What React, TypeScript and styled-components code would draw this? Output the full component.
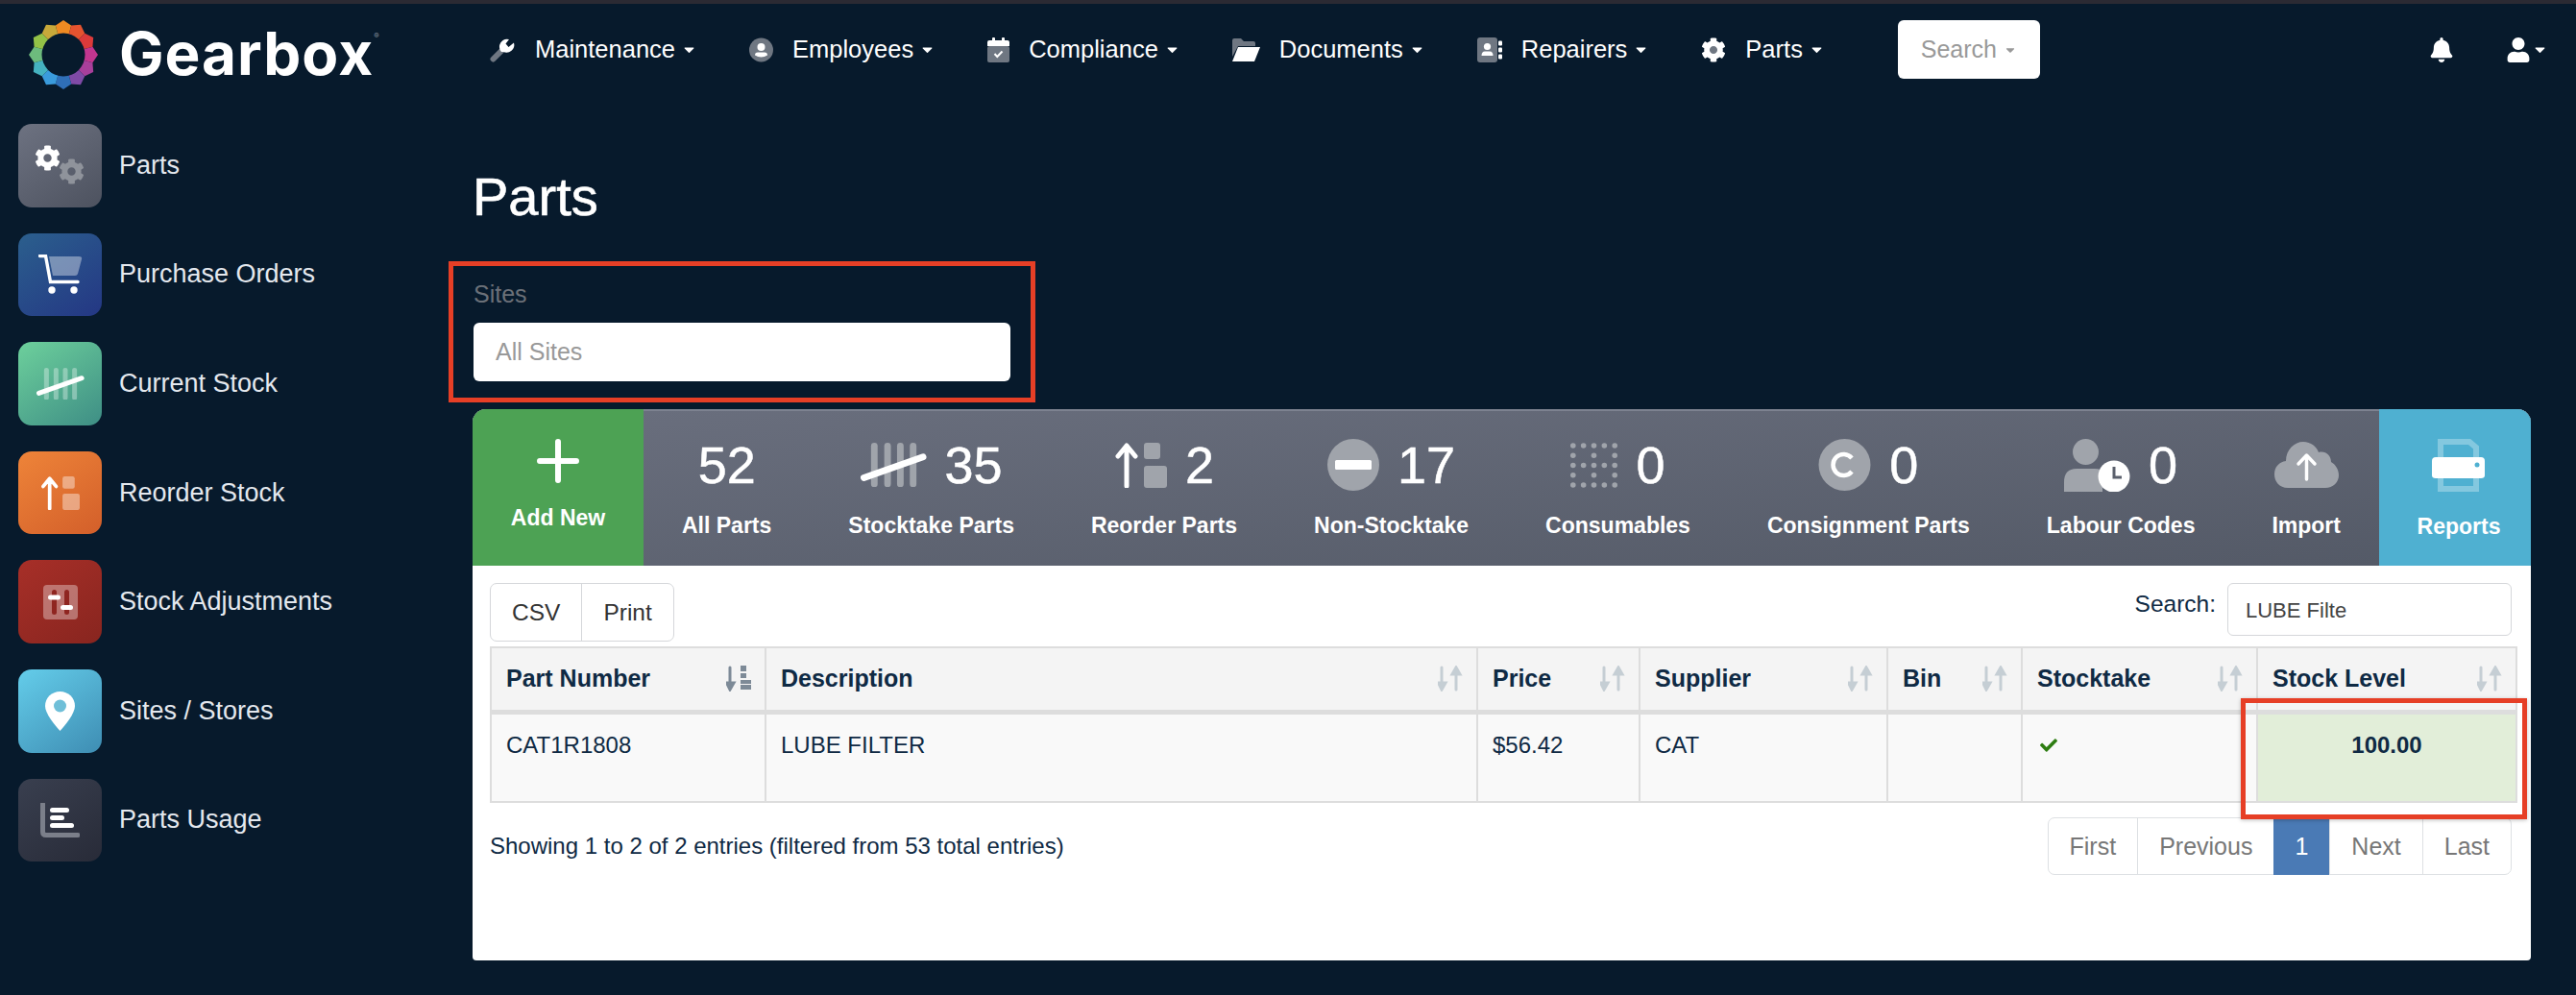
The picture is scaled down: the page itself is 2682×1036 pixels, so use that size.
import React from "react";
import styled, { createGlobalStyle } from "styled-components";
import { FaBell, FaCaretDown, FaCheck, FaUser } from "react-icons/fa";

const GEAR =
  "M487.4 315.7l-42.6-24.6c4.3-23.2 4.3-47 0-70.2l42.6-24.6c4.9-2.8 7.1-8.6 5.5-14-11.1-35.6-30-67.8-54.7-94.6-3.8-4.1-10-5.1-14.8-2.3L380.8 110c-17.9-15.4-38.5-27.3-60.8-35.1V25.8c0-5.6-3.9-10.5-9.4-11.7-36.7-8.2-74.3-7.8-109.2 0-5.5 1.2-9.4 6.1-9.4 11.7V75c-22.2 7.9-42.8 19.8-60.8 35.1L88.7 85.5c-4.9-2.8-11-1.9-14.8 2.3-24.7 26.7-43.6 58.9-54.7 94.6-1.7 5.4.6 11.2 5.5 14L67.3 221c-4.3 23.2-4.3 47 0 70.2l-42.6 24.6c-4.9 2.8-7.1 8.6-5.5 14 11.1 35.6 30 67.8 54.7 94.6 3.8 4.1 10 5.1 14.8 2.3l42.6-24.6c17.9 15.4 38.5 27.3 60.8 35.1v49.2c0 5.6 3.9 10.5 9.4 11.7 36.7 8.2 74.3 7.8 109.2 0 5.5-1.2 9.4-6.1 9.4-11.7v-49.2c22.2-7.9 42.8-19.8 60.8-35.1l42.6 24.6c4.9 2.8 11 1.9 14.8-2.3 24.7-26.7 43.6-58.9 54.7-94.6 1.5-5.5-.7-11.3-5.6-14.1zM256 336c-44.1 0-80-35.9-80-80s35.9-80 80-80 80 35.9 80 80-35.9 80-80 80z";

const GlobalStyle = createGlobalStyle`
  html, body {
    margin: 0;
    padding: 0;
    background: #071a2c;
  }
  body {
    font-family: "Liberation Sans", Arial, sans-serif;
    overflow: hidden;
  }
  * {
    box-sizing: border-box;
  }
`;

const Page = styled.div`
  width: 2682px;
  height: 1036px;
  background: #071a2c;
  border-top: 4px solid #2b2a33;
  overflow: hidden;
`;

const Header = styled.header`
  display: flex;
  align-items: flex-start;
  height: 96px;
  padding: 17px 29px 0 30px;
`;

const Brand = styled.div`
  display: flex;
  align-items: center;
  width: 480px;
  height: 71px;
  gap: 22px;
`;

const BrandName = styled.div`
  font-family: Inter, "Liberation Sans", sans-serif;
  font-size: 62px;
  font-weight: 700;
  letter-spacing: 1px;
  line-height: 1;
  color: #fff;
  margin-top: -2px;

  sup {
    font-size: 8px;
    font-weight: 400;
    letter-spacing: 0;
    color: #8b93a0;
    vertical-align: 38px;
    line-height: 0;
  }
`;

const Nav = styled.nav`
  display: flex;
  align-items: center;
  flex: 1;
  height: 61px;
`;

const NavItem = styled.a`
  display: flex;
  align-items: center;
  margin-right: 54px;
  color: #fff;
  font-size: 25.5px;

  > svg:first-child {
    margin-right: 20px;
  }
`;

const Caret = styled(FaCaretDown)`
  width: 17px;
  height: 17px;
  margin-left: 6px;
`;

const SearchButton = styled.button`
  display: flex;
  align-items: center;
  justify-content: center;
  gap: 7px;
  width: 148px;
  height: 61px;
  margin-left: 22px;
  border: 0;
  border-radius: 6px;
  background: #fff;
  color: #999;
  font: 25px "Liberation Sans", sans-serif;

  svg {
    width: 14px;
    height: 14px;
    margin: 0;
  }
`;

const RightIcons = styled.div`
  display: flex;
  align-items: center;
  margin-left: auto;
  gap: 54px;
  color: #fff;
`;

const UserMenu = styled.div`
  display: flex;
  align-items: center;

  svg + svg {
    margin-left: 1px;
  }
`;

const Main = styled.main`
  display: flex;
`;

const Sidebar = styled.aside`
  width: 492px;
  flex: none;
  padding: 29px 0 0 19px;
  display: flex;
  flex-direction: column;
  gap: 27px;
`;

const SideItem = styled.a`
  display: flex;
  align-items: center;
  gap: 18px;
  color: #e4e8ee;
  font-size: 27px;
`;

const Tile = styled.div<{ $from: string; $to: string }>`
  width: 87px;
  height: 86.6px;
  flex: none;
  display: flex;
  align-items: center;
  justify-content: center;
  border-radius: 14px;
  background: linear-gradient(145deg, ${(p) => p.$from}, ${(p) => p.$to});
`;

const Content = styled.section`
  width: 2143px;
  flex: none;
`;

const Title = styled.h1`
  margin: 0;
  padding-top: 73px;
  color: #fff;
  font-size: 56px;
  font-weight: 400;
  line-height: 64px;
  -webkit-text-stroke: 0.6px #fff;
`;

const SitesBox = styled.div`
  width: 611px;
  height: 147px;
  margin: 35px 0 7px -25px;
  padding: 12px 21px 0;
  border: 5px solid #e63f26;
`;

const SitesLabel = styled.label`
  display: block;
  height: 47px;
  color: #6b7078;
  font-size: 25px;
  line-height: 34px;
`;

const SitesSelect = styled.div`
  height: 61px;
  padding-left: 23px;
  border-radius: 6px;
  background: #fff;
  color: #999;
  font-size: 25px;
  line-height: 61px;
`;

const Card = styled.div`
  position: relative;
  height: 574px;
  border-radius: 14px 14px 4px 4px;
  background: #fff;
  overflow: hidden;
`;

const Toolbar = styled.div`
  display: flex;
  height: 163px;
  border-top: 2px solid #7d8290;
  background: linear-gradient(175deg, #6a6f7e, #535966);
`;

const ActionTile = styled.div<{ $bg: string; $width: number }>`
  width: ${(p) => p.$width}px;
  margin-top: -2px;
  flex: none;
  display: flex;
  flex-direction: column;
  align-items: center;
  padding-top: 31px;
  background: ${(p) => p.$bg};
`;

const Stats = styled.div`
  display: flex;
  flex: 1;
`;

const Stat = styled.div`
  display: flex;
  flex-direction: column;
  align-items: center;
  padding: 29px 40px 0;
`;

const StatTop = styled.div`
  display: flex;
  align-items: center;
  justify-content: center;
  gap: 19px;
  height: 54px;
`;

const StatValue = styled.span`
  color: #fff;
  font-size: 54px;
  line-height: 54px;
  -webkit-text-stroke: 0.5px #fff;
`;

const StatLabel = styled.div`
  margin-top: 21px;
  color: #fff;
  font-size: 23px;
  font-weight: 700;
  line-height: 30px;
  white-space: nowrap;
`;

const TableArea = styled.div`
  padding: 18px 20px 0 18px;
  color: #0f2a44;
`;

const Controls = styled.div`
  display: flex;
  justify-content: space-between;
  align-items: flex-start;
  height: 61px;
  margin-bottom: 5px;
`;

const ButtonGroup = styled.div`
  display: flex;
  height: 61px;
  border: 1px solid #d5d7da;
  border-radius: 7px;
`;

const GroupButton = styled.div`
  padding: 0 22px;
  color: #333;
  font-size: 24.5px;
  line-height: 59px;

  & + & {
    border-left: 1px solid #d5d7da;
  }
`;

const SearchField = styled.label`
  display: flex;
  align-items: flex-start;
  gap: 12px;
  font-size: 24.5px;
  line-height: 44px;
`;

const SearchValue = styled.div`
  width: 296px;
  height: 55px;
  padding-left: 18px;
  border: 1px solid #d5d7da;
  border-radius: 6px;
  color: #444;
  font-size: 22px;
  line-height: 55px;
`;

const Table = styled.table`
  width: 2109px;
  table-layout: fixed;
  border-collapse: collapse;
  font-size: 24px;
`;

const Th = styled.th`
  height: 67px;
  padding: 0 14px 0 15px;
  border: 2px solid #ddd;
  border-bottom-width: 5px;
  background: #f4f4f4;
  font-size: 25px;
  font-weight: 700;
  text-align: left;
`;

const ThInner = styled.div`
  display: flex;
  align-items: center;
  justify-content: space-between;
`;

const Td = styled.td<{ $stock?: boolean }>`
  height: 94px;
  padding: 17px 15px 0;
  vertical-align: top;
  border: 2px solid #ddd;
  background: ${(p) => (p.$stock ? "#e2eed9" : "#f9f9f9")};
  font-weight: ${(p) => (p.$stock ? 700 : 400)};
  text-align: ${(p) => (p.$stock ? "center" : "left")};
  line-height: 30px;
`;

const CheckMark = styled(FaCheck)`
  width: 24px;
  height: 18px;
  color: #2e7d12;
  margin-top: 6px;
`;

const Footer = styled.div`
  display: flex;
  align-items: center;
  justify-content: space-between;
  margin-top: 15px;
  font-size: 24px;
`;

const Pager = styled.div`
  display: flex;
  height: 60px;
  border: 1px solid #dde0e3;
  border-radius: 7px;
`;

const PageLink = styled.div<{ $active?: boolean }>`
  margin: ${(p) => (p.$active ? "-1px 0" : "0")};
  padding: 0 22px;
  color: ${(p) => (p.$active ? "#fff" : "#777")};
  background: ${(p) => (p.$active ? "#4a7ab5" : "transparent")};
  border-left: ${(p) => (p.$active ? "0" : "1px solid #dde0e3")};
  font-size: 25px;
  line-height: ${(p) => (p.$active ? "60px" : "58px")};

  &:first-child {
    border-left: 0;
  }
`;

const Highlight = styled.div`
  position: absolute;
  left: 1841px;
  top: 301px;
  width: 298px;
  height: 126px;
  border: 5px solid #e63f26;
  box-shadow: 0 1px 4px rgba(0, 0, 0, 0.25);
  pointer-events: none;
`;

const LogoMark = () => {
  const colors = [
    "#ef8a22", "#e5532f", "#dc3a3a", "#c2368f", "#a83f9b", "#7f4aa6",
    "#2f6fb8", "#3a9bdc", "#45b2c0", "#6dbb7d", "#93c247", "#c8a93a",
  ];
  const point = (deg: number, r: number) => {
    const a = ((deg - 90) * Math.PI) / 180;
    return `${36 + r * Math.cos(a)},${36 + r * Math.sin(a)}`;
  };
  return (
    <svg width="72" height="72" viewBox="0 0 72 72">
      {colors.map((c, i) => {
        const start = i * 30 - 15;
        return (
          <polygon
            key={c}
            fill={c}
            points={`36,36 ${point(start, 31.5)} ${point(start + 15, 36)} ${point(start + 30, 31.5)}`}
          />
        );
      })}
      <circle cx="36" cy="36" r="22.5" fill="#071a2c" />
    </svg>
  );
};

const WrenchIcon = () => (
  <svg width="27" height="27" viewBox="0 0 27 27">
    <path d="M3.5 23.5 L13 14" stroke="#6f7782" strokeWidth="6" strokeLinecap="round" />
    <path d="M12 16 A8 8 0 0 1 20 3 L16.5 7.5 L19.5 11 L25 6.5 A8 8 0 0 1 14 16 Z" fill="#fff" />
  </svg>
);

const PersonCircleIcon = () => (
  <svg width="25" height="26" viewBox="0 0 25 25">
    <circle cx="12.5" cy="12.5" r="12.5" fill="#6f7782" />
    <circle cx="12.5" cy="9.5" r="4" fill="#fff" />
    <path d="M6 18 Q6 15 9 15 H16 Q19 15 19 18 Q16 20 12.5 20 Q9 20 6 18Z" fill="#fff" />
  </svg>
);

const CalendarIcon = () => (
  <svg width="23" height="26" viewBox="0 0 23 26">
    <rect y="9" width="23" height="17" rx="2" fill="#6f7782" />
    <path d="M0 9 V5 Q0 3 2 3 H21 Q23 3 23 5 V9Z" fill="#fff" />
    <rect x="5" y="0" width="3" height="6" rx="1" fill="#fff" />
    <rect x="15" y="0" width="3" height="6" rx="1" fill="#fff" />
    <path d="M7.5 17 L10.3 20 L15.5 14.5" stroke="#fff" strokeWidth="2" fill="none" />
  </svg>
);

const FolderIcon = () => (
  <svg width="29" height="24" viewBox="0 0 29 24">
    <path d="M0 2 Q0 0 2 0 H9 L12 3 H22 Q24 3 24 5 V8 H6 L0 19Z" fill="#6f7782" />
    <path d="M6 9 H29 L23 24 H0Z" fill="#fff" />
  </svg>
);

const AddressBookIcon = () => (
  <svg width="26" height="26" viewBox="0 0 26 26">
    <rect width="21" height="26" rx="3" fill="#6f7782" />
    <circle cx="10.5" cy="9.5" r="3.6" fill="#fff" />
    <path d="M4.5 19 Q4.5 14.5 8 14.5 H13 Q16.5 14.5 16.5 19Z" fill="#fff" />
    <rect x="22" y="3.5" width="4" height="5" rx="1" fill="#fff" />
    <rect x="22" y="10.5" width="4" height="5" rx="1" fill="#fff" />
    <rect x="22" y="17.5" width="4" height="5" rx="1" fill="#fff" />
  </svg>
);

const CogIcon = () => (
  <svg width="26" height="26" viewBox="0 0 512 512">
    <circle cx="256" cy="256" r="90" fill="#6f7782" />
    <path d={GEAR} fill="#fff" />
  </svg>
);

const GearsIcon = () => (
  <svg width="54" height="42" viewBox="0 0 54 42">
    <svg x="0" y="0" width="27" height="27" viewBox="0 0 512 512">
      <path d={GEAR} fill="#fff" />
    </svg>
    <svg x="25" y="14" width="27" height="27" viewBox="0 0 512 512">
      <path d={GEAR} fill="#8f939b" />
    </svg>
  </svg>
);

const CartIcon = () => (
  <svg width="46" height="41" viewBox="0 0 46 41">
    <path d="M11 2 H42 Q46 2 45 5 L41 20 Q40.500 22 38 22 H15Z" fill="#fff" fillOpacity="0.38" />
    <path d="M1.500 1.500 H7.500 L12.500 28.500 H41" stroke="#fff" strokeWidth="3.400" strokeLinecap="round" fill="none" />
    <circle cx="14" cy="37" r="3.700" fill="#fff" />
    <circle cx="37" cy="37" r="3.700" fill="#fff" />
  </svg>
);

const TallyIcon = ({ w, bar }: { w: number; bar: string }) => (
  <svg width={w} height={(w * 47) / 70} viewBox="0 0 70 47">
    {[11, 25, 38.5, 52].map((x) => (
      <rect key={x} x={x} width="7" height="47" rx="3.500" fill={bar} />
    ))}
    <path d="M3.500 37 L66 15" stroke="#fff" strokeWidth="7" strokeLinecap="round" />
  </svg>
);

const ReorderIcon = ({ w, box }: { w: number; box: string }) => (
  <svg width={w} height={(w * 47) / 55} viewBox="0 0 55 47">
    <path d="M13 45 V4 M4 14 L13 3 L22 14" stroke="#fff" strokeWidth="5" strokeLinecap="round" strokeLinejoin="round" fill="none" />
    <rect x="31" width="17" height="17" rx="3" fill={box} />
    <rect x="31" y="24" width="24" height="23" rx="3" fill={box} />
  </svg>
);

const AdjustIcon = () => (
  <svg width="36" height="36" viewBox="0 0 36 36">
    <rect width="36" height="36" rx="4" fill="#fff" fillOpacity="0.35" />
    <rect x="9" y="5" width="5" height="26" rx="2.500" fill="#8f2520" />
    <rect x="22" y="5" width="5" height="26" rx="2.500" fill="#8f2520" />
    <rect x="5" y="10.500" width="13" height="5" rx="2.500" fill="#fff" />
    <rect x="18" y="21" width="13" height="5" rx="2.500" fill="#fff" />
  </svg>
);

const PinIcon = () => (
  <svg width="31" height="41" viewBox="0 0 31 41">
    <path d="M15.500 0 C24 0 31 6.500 31 15 C31 23 21 35 15.500 41 C10 35 0 23 0 15 C0 6.500 7 0 15.500 0Z" fill="#fff" />
    <circle cx="15.500" cy="15" r="6.500" fill="#6fbfd8" />
  </svg>
);

const UsageIcon = () => (
  <svg width="41" height="36" viewBox="0 0 41 36">
    <path d="M2.500 1 V30 Q2.500 33.500 6 33.500 H39" stroke="#7b7f8a" strokeWidth="5" strokeLinecap="round" fill="none" />
    <rect x="10" y="5" width="20" height="5" rx="2.500" fill="#fff" />
    <rect x="10" y="13" width="15" height="5" rx="2.500" fill="#fff" />
    <rect x="10" y="21" width="25" height="5" rx="2.500" fill="#fff" />
  </svg>
);

const PlusIcon = () => (
  <svg width="44" height="46" viewBox="0 0 44 46">
    <path d="M22 3 V43 M3 23 H41" stroke="#fff" strokeWidth="6" strokeLinecap="round" />
  </svg>
);

const MinusCircleIcon = () => (
  <svg width="54" height="54" viewBox="0 0 54 54">
    <circle cx="27" cy="27" r="27" fill="#a0a4ab" />
    <rect x="8" y="22" width="38" height="10" rx="1.500" fill="#fff" />
  </svg>
);

const DotsIcon = () => (
  <svg width="49" height="47" viewBox="0 0 49 47">
    {[0, 1, 2, 3, 4].flatMap((row) =>
      [0, 1, 2, 3, 4]
        .filter((col) => row % 2 === 0 || col % 2 === 0)
        .map((col) => (
          <circle key={`${row}-${col}`} cx={2.800 + col * 10.850} cy={3 + row * 10.250} r="2.800" fill="#a0a4ab" />
        )),
    )}
  </svg>
);

const CopyCircleIcon = () => (
  <svg width="55" height="54" viewBox="0 0 55 54">
    <circle cx="27.500" cy="27" r="27" fill="#a0a4ab" />
    <path d="M35 20 A11 11 0 1 0 35 34" stroke="#fff" strokeWidth="4.500" fill="none" />
  </svg>
);

const LabourIcon = () => (
  <svg width="69" height="55" viewBox="0 0 69 55">
    <circle cx="22.500" cy="13.500" r="13.500" fill="#a0a4ab" />
    <path d="M0 55 V45 Q0 31 13 31 H32 Q40 31 40 36 V55Z" fill="#a0a4ab" />
    <circle cx="52" cy="39" r="16.500" fill="#fff" />
    <path d="M52 29 V40 H60" stroke="#5b606d" strokeWidth="3" fill="none" />
  </svg>
);

const CloudIcon = () => (
  <svg width="67" height="48" viewBox="0 0 67 48">
    <path d="M14 48 C5 48 0 41 0 34 C0 26 5 21 12 20 C12 8 21 0 30 0 C38 0 44 5 46 11 C53 9 59 14 59 21 C64 24 67 29 67 35 C67 42 61 48 53 48Z" fill="#a0a4ab" />
    <path d="M33.500 39 V15 M25 23 L33.500 14 L42 23" stroke="#fff" strokeWidth="3.500" strokeLinecap="round" strokeLinejoin="round" fill="none" />
  </svg>
);

const PrinterIcon = () => (
  <svg width="55" height="55" viewBox="0 0 55 55">
    <path d="M9 20 V3 H39 L46 9 V20" stroke="#fff" strokeOpacity="0.3" strokeWidth="6" fill="none" />
    <path d="M9 36 V52 H46 V36" stroke="#fff" strokeOpacity="0.3" strokeWidth="6" fill="none" />
    <path d="M4 19 H51 Q55 19 55 23 V38 Q55 41 51 41 H4 Q0 41 0 38 V23 Q0 19 4 19Z" fill="#fff" />
    <circle cx="47" cy="27" r="2.500" fill="#4fb0d1" />
  </svg>
);

const SortIcon = ({ sorted }: { sorted?: boolean }) => {
  const color = sorted ? "#7d8a97" : "#c5ced4";
  return (
    <svg width="26" height="27" viewBox="0 0 26 27">
      <path d="M4 2 V21 M0.500 18 L4 25 L8 18Z" stroke={color} strokeWidth="3" fill={color} strokeLinecap="round" />
      {sorted ? (
        <g fill={color}>
          <rect x="15" width="6" height="6" />
          <rect x="15" y="8" width="6" height="5" />
          <rect x="15" y="15" width="11" height="4" />
          <rect x="15" y="20" width="11" height="5" />
        </g>
      ) : (
        <path d="M19 25 V6 M15 9 L19 2 L23 9Z" stroke={color} strokeWidth="3" fill={color} strokeLinecap="round" />
      )}
    </svg>
  );
};

const SIDE_ITEMS = [
  { label: "Parts", from: "#6d7281", to: "#4d525f", icon: <GearsIcon /> },
  { label: "Purchase Orders", from: "#2b5f8d", to: "#243784", icon: <CartIcon /> },
  { label: "Current Stock", from: "#6dd09c", to: "#3e8e85", icon: <TallyIcon w={50} bar="#ffffff55" /> },
  { label: "Reorder Stock", from: "#ee8439", to: "#d35f2a", icon: <ReorderIcon w={41} box="#ffffff66" /> },
  { label: "Stock Adjustments", from: "#a72f28", to: "#88251f", icon: <AdjustIcon /> },
  { label: "Sites / Stores", from: "#64cdea", to: "#3e8db3", icon: <PinIcon /> },
  { label: "Parts Usage", from: "#393f4f", to: "#282b38", icon: <UsageIcon /> },
];

const NAV_ITEMS = [
  { label: "Maintenance", icon: <WrenchIcon /> },
  { label: "Employees", icon: <PersonCircleIcon /> },
  { label: "Compliance", icon: <CalendarIcon /> },
  { label: "Documents", icon: <FolderIcon /> },
  { label: "Repairers", icon: <AddressBookIcon /> },
  { label: "Parts", icon: <CogIcon /> },
];

const STATS = [
  { label: "All Parts", value: "52" },
  { label: "Stocktake Parts", value: "35", icon: <TallyIcon w={69} bar="#a0a4ab" /> },
  { label: "Reorder Parts", value: "2", icon: <ReorderIcon w={55} box="#a0a4ab" /> },
  { label: "Non-Stocktake", value: "17", icon: <MinusCircleIcon /> },
  { label: "Consumables", value: "0", icon: <DotsIcon /> },
  { label: "Consignment Parts", value: "0", icon: <CopyCircleIcon /> },
  { label: "Labour Codes", value: "0", icon: <LabourIcon /> },
  { label: "Import", icon: <CloudIcon /> },
];

const COLUMNS = [
  { label: "Part Number", width: 286, sorted: true },
  { label: "Description", width: 741 },
  { label: "Price", width: 169 },
  { label: "Supplier", width: 258 },
  { label: "Bin", width: 140 },
  { label: "Stocktake", width: 245 },
  { label: "Stock Level", width: 270 },
];

export default function App() {
  return (
    <Page>
      <GlobalStyle />
      <Header>
        <Brand>
          <LogoMark />
          <BrandName>
            Gearbox<sup>®</sup>
          </BrandName>
        </Brand>
        <Nav>
          {NAV_ITEMS.map((item) => (
            <NavItem key={item.label}>
              {item.icon}
              {item.label}
              <Caret />
            </NavItem>
          ))}
          <SearchButton>
            Search
            <FaCaretDown />
          </SearchButton>
          <RightIcons>
            <FaBell size={26} />
            <UserMenu>
              <FaUser size={26} />
              <Caret />
            </UserMenu>
          </RightIcons>
        </Nav>
      </Header>
      <Main>
        <Sidebar>
          {SIDE_ITEMS.map((item) => (
            <SideItem key={item.label}>
              <Tile $from={item.from} $to={item.to}>
                {item.icon}
              </Tile>
              {item.label}
            </SideItem>
          ))}
        </Sidebar>
        <Content>
          <Title>Parts</Title>
          <SitesBox>
            <SitesLabel>Sites</SitesLabel>
            <SitesSelect>All Sites</SitesSelect>
          </SitesBox>
          <Card>
            <Toolbar>
              <ActionTile $bg="#4da254" $width={178}>
                <PlusIcon />
                <StatLabel>Add New</StatLabel>
              </ActionTile>
              <Stats>
                {STATS.map((stat) => (
                  <Stat key={stat.label}>
                    <StatTop>
                      {stat.icon}
                      {stat.value && <StatValue>{stat.value}</StatValue>}
                    </StatTop>
                    <StatLabel>{stat.label}</StatLabel>
                  </Stat>
                ))}
              </Stats>
              <ActionTile $bg="#4fb0d1" $width={166}>
                <PrinterIcon />
                <StatLabel>Reports</StatLabel>
              </ActionTile>
            </Toolbar>
            <TableArea>
              <Controls>
                <ButtonGroup>
                  <GroupButton>CSV</GroupButton>
                  <GroupButton>Print</GroupButton>
                </ButtonGroup>
                <SearchField>
                  Search:
                  <SearchValue>LUBE Filte</SearchValue>
                </SearchField>
              </Controls>
              <Table>
                <colgroup>
                  {COLUMNS.map((col) => (
                    <col key={col.label} width={col.width} />
                  ))}
                </colgroup>
                <thead>
                  <tr>
                    {COLUMNS.map((col) => (
                      <Th key={col.label}>
                        <ThInner>
                          {col.label}
                          <SortIcon sorted={col.sorted} />
                        </ThInner>
                      </Th>
                    ))}
                  </tr>
                </thead>
                <tbody>
                  <tr>
                    <Td>CAT1R1808</Td>
                    <Td>LUBE FILTER</Td>
                    <Td>$56.42</Td>
                    <Td>CAT</Td>
                    <Td />
                    <Td>
                      <CheckMark />
                    </Td>
                    <Td $stock>100.00</Td>
                  </tr>
                </tbody>
              </Table>
              <Footer>
                <span>Showing 1 to 2 of 2 entries (filtered from 53 total entries)</span>
                <Pager>
                  <PageLink>First</PageLink>
                  <PageLink>Previous</PageLink>
                  <PageLink $active>1</PageLink>
                  <PageLink>Next</PageLink>
                  <PageLink>Last</PageLink>
                </Pager>
              </Footer>
            </TableArea>
            <Highlight />
          </Card>
        </Content>
      </Main>
    </Page>
  );
}
